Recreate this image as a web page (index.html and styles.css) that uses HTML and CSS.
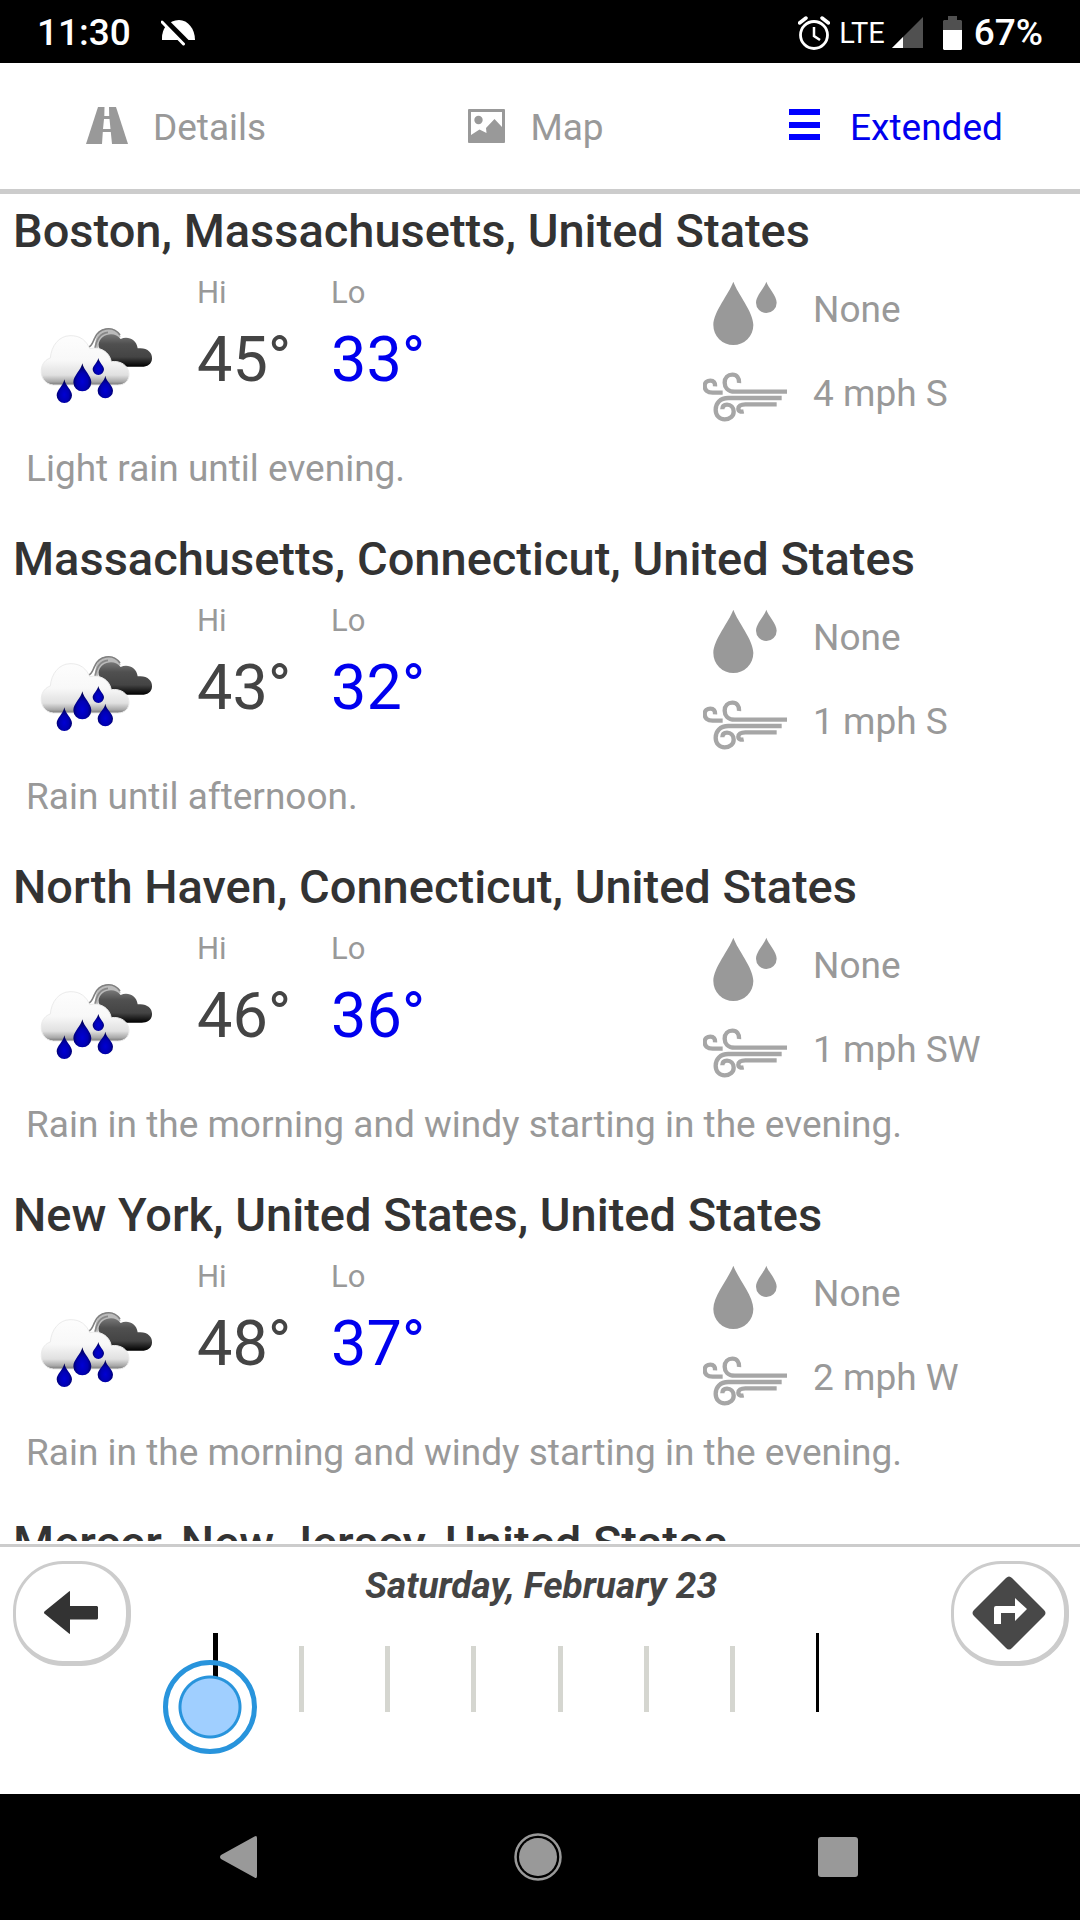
FILE: index.html
```html
<!DOCTYPE html>
<html lang="en">
<head>
<meta charset="utf-8">
<meta name="viewport" content="width=device-width, initial-scale=1">
<title>Extended forecast</title>
<link rel="stylesheet" href="styles.css">
</head>
<body>
<svg class="sprite" aria-hidden="true">
  <defs>
    <linearGradient id="cloud-light" x1="0" y1="0" x2="0" y2="1">
      <stop offset="0" stop-color="#fdfdfd"/>
      <stop offset=".5" stop-color="#f8f8f8"/>
      <stop offset=".8" stop-color="#e0e0e0"/>
      <stop offset=".93" stop-color="#aaa"/>
      <stop offset="1" stop-color="#777"/>
    </linearGradient>
    <linearGradient id="cloud-dark" x1="0" y1="0" x2="0" y2="1">
      <stop offset="0" stop-color="#777"/>
      <stop offset=".3" stop-color="#505050"/>
      <stop offset=".7" stop-color="#444"/>
      <stop offset="1" stop-color="#000"/>
    </linearGradient>
    <radialGradient id="rain-drop" cx=".5" cy=".65" r=".6">
      <stop offset="0" stop-color="#0000d4"/>
      <stop offset=".5" stop-color="#0000b4"/>
      <stop offset="1" stop-color="#00004c"/>
    </radialGradient>
  </defs>
  <symbol id="rain" viewBox="54 45 354 246">
    <path d="M226 120C222 80 240 58 264 57C284 57 298 70 302 84Z" fill="#bbb"/>
    <path d="M204 116C218 110 219 96 225 86C236 58 278 47 300 78" fill="none" stroke="#808080" stroke-width="5"/>
    <path d="M224 124C228 92 240 72 264 70" fill="none" stroke="#888" stroke-width="5"/>
    <path d="M236 106C238 76 284 64 302 90C324 80 350 92 353 118C380 114 398 130 396 149C395 165 382 173 365 173H280L240 135Z" fill="url(#cloud-dark)"/>
    <path d="M100 228C74 226 62 204 64 183C65 164 78 151 91 147C94 111 116 81 150 80C181 79 200 96 209 119C240 112 268 128 274 158C302 154 326 170 327 195C328 215 314 228 293 228Z" fill="url(#cloud-light)" stroke="#ebebeb" stroke-width="3"/>
    <g fill="url(#rain-drop)">
      <path d="M187 163C191 184 214 200 214 220A27 27 0 0 1 160 220C160 200 183 184 187 163Z"/>
      <path d="M235 147C238 162 252 170 252 181A17 17 0 0 1 218 181C218 170 232 162 235 147Z"/>
      <path d="M133 211C136 230 156 243 156 259A23 23 0 0 1 110 259C110 243 130 230 133 211Z"/>
      <path d="M256 200C259 218 279 229 279 245A23 23 0 0 1 233 245C233 229 253 218 256 200Z"/>
    </g>
  </symbol>
  <symbol id="drops" viewBox="39 15 252 216">
    <path d="M130 38C143 75 190 128 190 168A60 60 0 0 1 70 168C70 128 117 75 130 38Z" fill="#999"/>
    <path d="M229 38C234 55 260 80 260 101A31 31 0 0 1 198 101C198 80 224 55 229 38Z" fill="#999"/>
  </symbol>
  <symbol id="wind" viewBox="39 267 252 216">
    <g fill="none" stroke="#a6a6a6" stroke-width="13">
      <path d="M291 368H135C112 368 104 353 104 341C104 326 114 317 127 317C141 317 148 327 147 342"/>
      <path d="M98 371H68C52 371 44 363 44 351C44 340 52 335 61 335C71 335 76 341 75 352"/>
      <path d="M275 387H115C90 387 77 403 77 422C77 439 88 451 104 451C120 451 131 441 131 428C131 415 122 407 111 407C102 407 97 412 97 421"/>
      <path d="M260 406H166C152 406 145 412 145 419C145 427 152 429 161 427"/>
    </g>
  </symbol>
</svg>

<header class="status">
  <span class="status-time">11:30</span>
  <svg class="status-dome" viewBox="0 0 34 26" aria-hidden="true">
    <path d="M1 20C1 9 8 0 18 0C27 0 34 9 34 20Z" fill="#fff"/>
    <path d="M0 -2L27 25" stroke="#000" stroke-width="8"/>
    <path d="M1 2L22.500 24" stroke="#fff" stroke-width="3" stroke-linecap="round"/>
    <path d="M1 20C1 14 2 10 4.500 6.500L18 20Z" fill="#fff"/>
  </svg>
  <div class="status-right">
    <svg class="status-alarm" viewBox="0 0 32 34" fill="none" stroke="#fff" aria-hidden="true">
      <circle cx="16" cy="19" r="13.500" stroke-width="2.800"/>
      <path d="M16 11V20L22 24" stroke-width="2.500"/>
      <path d="M1.500 7L8 2M30.500 7L24 2" stroke-width="3.500" stroke-linecap="round"/>
    </svg>
    <span class="status-lte">LTE</span>
    <svg class="status-signal" viewBox="0 0 31 31" aria-hidden="true">
      <path d="M31 0V31H0Z" fill="#505050"/><path d="M11 20V31H0Z" fill="#fff"/>
    </svg>
    <svg class="status-battery" viewBox="0 0 19 34" aria-hidden="true">
      <path d="M5 0H14V4H18L19 5V15H0V5L1 4H5Z" fill="#505050"/>
      <path d="M0 14H19V33L18 34H1L0 33Z" fill="#fff"/>
    </svg>
    <span class="status-percent">67%</span>
  </div>
</header>

<nav class="tabs">
  <a class="tab" href="#details">
    <svg class="icon-road" viewBox="0 0 42 42" aria-hidden="true">
      <path d="M12 0H30L42 37H0Z" fill="#999"/>
      <path d="M18.500 0H23L23.200 9H18.300ZM18 12H23.500L24.500 22H17ZM16.800 25H24.800L26 37H16Z" fill="#fff"/>
    </svg>
    Details
  </a>
  <a class="tab" href="#map">
    <svg class="icon-map" viewBox="0 0 37 42" aria-hidden="true">
      <rect y="2" width="37" height="34" rx="1" fill="#999"/>
      <path d="M3 5H34V20L26.500 12L18 21L18.500 26L11.500 22.500L3 28Z" fill="#fff"/>
      <circle cx="10.500" cy="13" r="4.200" fill="#999"/>
    </svg>
    Map
  </a>
  <a class="tab tab-active" href="#extended" aria-current="page">
    <svg class="icon-list" viewBox="0 0 36 42" fill="#00f" aria-hidden="true">
      <rect y="2" width="31" height="6"/><rect y="15" width="31" height="6"/><rect y="27" width="31" height="6"/>
    </svg>
    Extended
  </a>
</nav>

<main class="forecasts">
  <article class="forecast">
    <h2>Boston, Massachusetts, United States</h2>
    <div class="readings">
      <svg class="weather" role="img" aria-label="Rain"><use href="#rain"/></svg>
      <div class="temp"><span class="temp-label">Hi</span><span class="temp-value">45°</span></div>
      <div class="temp temp-low"><span class="temp-label">Lo</span><span class="temp-value">33°</span></div>
      <ul class="conditions">
        <li><svg class="condition-icon" aria-hidden="true"><use href="#drops"/></svg>None</li>
        <li><svg class="condition-icon" aria-hidden="true"><use href="#wind"/></svg>4 mph S</li>
      </ul>
    </div>
    <p>Light rain until evening.</p>
  </article>
  <article class="forecast">
    <h2>Massachusetts, Connecticut, United States</h2>
    <div class="readings">
      <svg class="weather" role="img" aria-label="Rain"><use href="#rain"/></svg>
      <div class="temp"><span class="temp-label">Hi</span><span class="temp-value">43°</span></div>
      <div class="temp temp-low"><span class="temp-label">Lo</span><span class="temp-value">32°</span></div>
      <ul class="conditions">
        <li><svg class="condition-icon" aria-hidden="true"><use href="#drops"/></svg>None</li>
        <li><svg class="condition-icon" aria-hidden="true"><use href="#wind"/></svg>1 mph S</li>
      </ul>
    </div>
    <p>Rain until afternoon.</p>
  </article>
  <article class="forecast">
    <h2>North Haven, Connecticut, United States</h2>
    <div class="readings">
      <svg class="weather" role="img" aria-label="Rain"><use href="#rain"/></svg>
      <div class="temp"><span class="temp-label">Hi</span><span class="temp-value">46°</span></div>
      <div class="temp temp-low"><span class="temp-label">Lo</span><span class="temp-value">36°</span></div>
      <ul class="conditions">
        <li><svg class="condition-icon" aria-hidden="true"><use href="#drops"/></svg>None</li>
        <li><svg class="condition-icon" aria-hidden="true"><use href="#wind"/></svg>1 mph SW</li>
      </ul>
    </div>
    <p>Rain in the morning and windy starting in the evening.</p>
  </article>
  <article class="forecast">
    <h2>New York, United States, United States</h2>
    <div class="readings">
      <svg class="weather" role="img" aria-label="Rain"><use href="#rain"/></svg>
      <div class="temp"><span class="temp-label">Hi</span><span class="temp-value">48°</span></div>
      <div class="temp temp-low"><span class="temp-label">Lo</span><span class="temp-value">37°</span></div>
      <ul class="conditions">
        <li><svg class="condition-icon" aria-hidden="true"><use href="#drops"/></svg>None</li>
        <li><svg class="condition-icon" aria-hidden="true"><use href="#wind"/></svg>2 mph W</li>
      </ul>
    </div>
    <p>Rain in the morning and windy starting in the evening.</p>
  </article>
  <article class="forecast">
    <h2>Mercer, New Jersey, United States</h2>
  </article>
</main>

<section class="day-panel">
  <button class="round-button" type="button" aria-label="Back">
    <svg class="icon-back" viewBox="0 0 54 43" aria-hidden="true">
      <path d="M0 21.500Q0 20.500 1 20L25 .5L26 0V15H53L54 16V27.500L53 28.500H26V43L25 42.500L1 23Q0 22.500 0 21.500Z" fill="#333"/>
    </svg>
  </button>
  <div class="day">
    <label class="day-label" for="day">Saturday, February 23</label>
    <div class="day-slider">
      <div class="ticks" aria-hidden="true">
        <i class="tick tick-start"></i><i class="tick"></i><i class="tick"></i><i class="tick"></i><i class="tick"></i><i class="tick"></i><i class="tick"></i><i class="tick tick-end"></i>
      </div>
      <input class="day-range" id="day" type="range" min="0" max="7" value="0">
    </div>
  </div>
  <button class="round-button" type="button" aria-label="Directions">
    <svg class="icon-directions" viewBox="0 0 74 74" aria-hidden="true">
      <path d="M34 2Q37 -1 40 2L72 34Q75 37 72 40L40 72Q37 75 34 72L2 40Q-1 37 2 34Z" fill="#484848"/>
      <path d="M22 48V32Q22 30 24 30H43V22L55 33L43 45V37H29V48Z" fill="#fff"/>
    </svg>
  </button>
</section>

<footer class="system-nav">
  <button type="button" aria-label="System back">
    <svg class="nav-back" viewBox="0 0 37 42" aria-hidden="true"><path d="M34.500 .5Q37 -1 37 2V40Q37 43 34.500 41.500L1 23Q-1 21 1 19Z" fill="#999"/></svg>
  </button>
  <button type="button" aria-label="Home">
    <svg class="nav-home" viewBox="0 0 48 48" aria-hidden="true"><circle cx="24" cy="24" r="22.500" fill="none" stroke="#999" stroke-width="2.500"/><circle cx="24" cy="24" r="19" fill="#999"/></svg>
  </button>
  <button type="button" aria-label="Recent apps">
    <svg class="nav-recent" viewBox="0 0 40 40" aria-hidden="true"><rect width="40" height="40" rx="3" fill="#999"/></svg>
  </button>
</footer>
</body>
</html>
```
FILE: styles.css
```css
* {
  box-sizing: border-box;
}

body {
  margin: 0;
  height: 100vh;
  display: flex;
  flex-direction: column;
  background: #fff;
  color: #999;
  font-family: Roboto, "Liberation Sans", sans-serif;
  font-size: 37px;
  line-height: 42px;
}

svg {
  display: block;
  flex: none;
}

h2,
p,
ul {
  margin: 0;
  padding: 0;
}

button {
  padding: 0;
  cursor: pointer;
}

.sprite {
  position: absolute;
  width: 0;
  height: 0;
}

/* Status bar */
.status {
  flex: none;
  display: flex;
  align-items: center;
  height: 63px;
  padding: 2px 37px 0;
  background: #000;
  color: #fff;
  font-weight: 500;
}

.status-dome {
  width: 34px;
  height: 26px;
  margin-left: 30px;
}

.status-right {
  display: flex;
  align-items: center;
  margin-left: auto;
}

.status-alarm {
  width: 32px;
  height: 34px;
  margin-right: 9px;
}

.status-lte {
  font-size: 29px;
  font-weight: 400;
}

.status-signal {
  width: 31px;
  height: 31px;
  margin: 0 20px 0 7px;
}

.status-battery {
  width: 19px;
  height: 34px;
  margin-right: 12px;
}

/* Tabs */
.tabs {
  flex: none;
  display: grid;
  grid-template-columns: repeat(3, 1fr);
  border-bottom: 5px solid #ccc;
}

.tab {
  display: flex;
  align-items: center;
  justify-content: center;
  gap: 25px;
  height: 126px;
  padding: 3px 8px 0 0;
  color: #999;
  text-decoration: none;
}

.tab-active {
  color: #00e;
}

.icon-road {
  width: 42px;
  height: 42px;
}

.icon-map {
  width: 37px;
  height: 42px;
}

.icon-list {
  width: 36px;
  height: 42px;
}

/* Forecast list */
.forecasts {
  flex: 1;
  min-height: 0;
  margin-bottom: 3px;
  padding-top: 10px;
  overflow: hidden;
}

.forecast {
  padding-bottom: 42px;
}

.forecast h2 {
  padding-left: 13px;
  color: #333;
  font-size: 47px;
  font-weight: 500;
  line-height: 54px;
}

.forecast p {
  padding-left: 26px;
}

.readings {
  display: grid;
  grid-template-columns: 159px 134px 1fr 377px;
  height: 190px;
  padding-left: 38px;
}

.weather {
  width: 118px;
  height: 82px;
  margin-top: 66px;
}

.temp {
  display: flex;
  flex-direction: column;
  gap: 11px;
  padding-top: 17px;
}

.temp-label {
  font-size: 31px;
  line-height: 36px;
}

.temp-value {
  color: #444;
  font-size: 63px;
  line-height: 76px;
}

.temp-low .temp-value {
  color: #00e;
}

.conditions {
  padding-top: 10px;
  list-style: none;
}

.conditions li {
  display: flex;
  align-items: center;
  gap: 26px;
  height: 84px;
}

.condition-icon {
  width: 84px;
  height: 72px;
}

/* Day picker */
.day-panel {
  flex: none;
  display: flex;
  align-items: flex-start;
  padding: 14px 11px 40px 13px;
  border-top: 3px solid #ccc;
}

.round-button {
  flex: none;
  display: flex;
  align-items: center;
  justify-content: center;
  width: 118px;
  height: 105px;
  border: 3px solid #ccc;
  border-right-width: 5px;
  border-bottom-width: 5px;
  border-radius: 50px;
  background: #fff;
}

.icon-back {
  width: 54px;
  height: 43px;
}

.icon-directions {
  width: 74px;
  height: 74px;
}

.day {
  flex: 1;
  display: flex;
  flex-direction: column;
  gap: 26px;
  padding-top: 4px;
}

.day-label {
  color: #444;
  font-style: italic;
  font-weight: 700;
  text-align: center;
}

.day-slider {
  display: grid;
}

.ticks,
.day-range {
  grid-area: 1 / 1;
}

.ticks {
  display: flex;
  align-items: flex-end;
  align-self: start;
  justify-content: space-between;
  height: 79px;
  margin: 0 132px 0 82px;
}

.tick {
  width: 5px;
  height: 66px;
  background: #d5d6d0;
}

.tick-start,
.tick-end {
  height: 79px;
  background: #000;
}

.tick-end {
  width: 3px;
}

.day-range {
  appearance: none;
  height: 94px;
  margin: 27px 85px 0 32px;
  background: transparent;
}

.day-range::-webkit-slider-thumb {
  appearance: none;
  width: 94px;
  height: 94px;
  border: 5px solid #2894dc;
  border-radius: 50%;
  background: radial-gradient(circle, #a0cfff 28px, #2894dc 29px, #2894dc 31px, transparent 32px);
}

/* System navigation */
.system-nav {
  flex: none;
  display: flex;
  align-items: center;
  justify-content: space-around;
  height: 126px;
  padding: 0 92px 0 88px;
  background: #000;
}

.system-nav button {
  display: flex;
  justify-content: center;
  width: 96px;
  border: 0;
  background: transparent;
}

.nav-back {
  width: 37px;
  height: 42px;
}

.nav-home {
  width: 48px;
  height: 48px;
}

.nav-recent {
  width: 40px;
  height: 40px;
}
```
